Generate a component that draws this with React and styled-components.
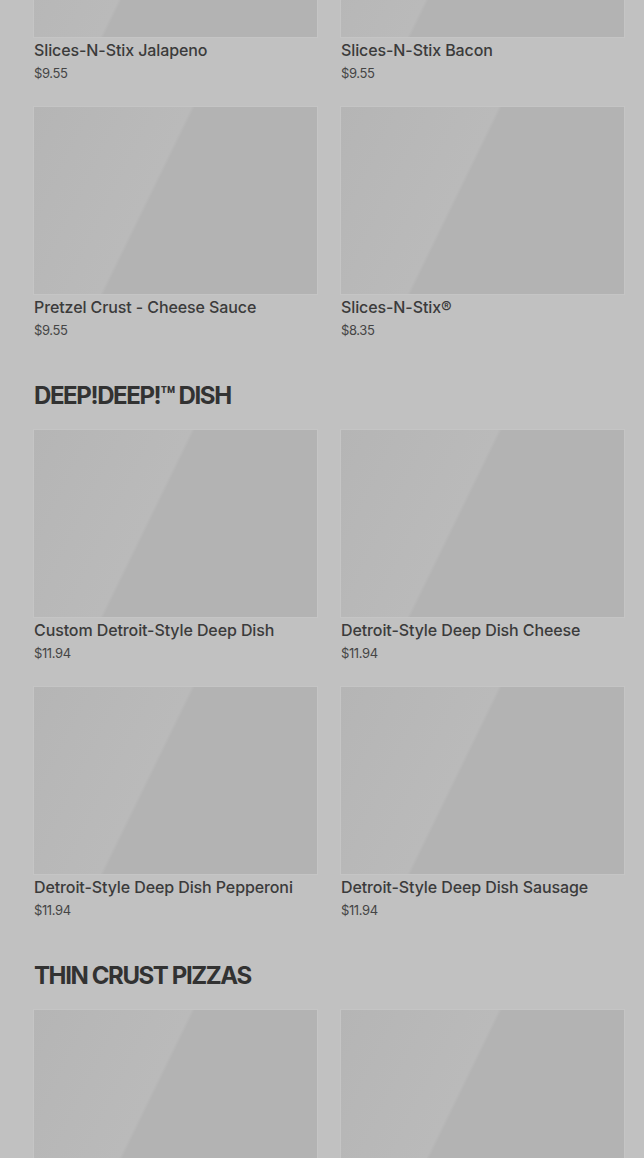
import React from "react";
import styled, { createGlobalStyle } from "styled-components";

const Global = createGlobalStyle`
  html, body { margin: 0; padding: 0; background: #c1c1c1; }
  body { font-family: Inter, Roboto, "Liberation Sans", Arial, sans-serif; overflow: hidden; }
  * { box-sizing: border-box; }
`;

const Page = styled.main`
  margin-top: -150px;
  padding: 0 20px 0 34px;
  display: flex;
  flex-direction: column;
`;

const Section = styled.section`
  display: flex;
  flex-direction: column;
  & + & { margin-top: 41px; }
`;

const Heading = styled.h2`
  margin: 0 0 18px;
  font-size: 24px;
  line-height: 32px;
  font-weight: 700;
  letter-spacing: -1.4px;
  color: #323232;
  text-transform: uppercase;
`;

const Grid = styled.div`
  display: grid;
  grid-template-columns: 1fr 1fr;
  column-gap: 24px;
  row-gap: 25px;
`;

const Card = styled.div`
  display: flex;
  flex-direction: column;
`;

const Thumb = styled.div`
  height: 187px;
  background: linear-gradient(
    116deg,
    #b5b5b5 0%,
    #b8b8b8 25%,
    #bababa 42%,
    #b3b3b3 43%,
    #b3b3b3 100%
  );
  box-shadow: 0 0 0 1px #c5c5c5;
`;

const Title = styled.div`
  margin-top: 3px;
  font-size: 16px;
  line-height: 20px;
  font-weight: 500;
  letter-spacing: -0.1px;
  color: #3b3b3b;
  white-space: nowrap;
`;

const Price = styled.div`
  margin-top: 4px;
  font-size: 13px;
  line-height: 18px;
  font-weight: 400;
  color: #454545;
  letter-spacing: -0.4px;
`;

const sections = [
  {
    title: null,
    items: [
      ["Slices-N-Stix Jalapeno", "$9.55"],
      ["Slices-N-Stix Bacon", "$9.55"],
      ["Pretzel Crust - Cheese Sauce", "$9.55"],
      ["Slices-N-Stix®", "$8.35"],
    ],
  },
  {
    title: "DEEP!DEEP!™ DISH",
    items: [
      ["Custom Detroit-Style Deep Dish", "$11.94"],
      ["Detroit-Style Deep Dish Cheese", "$11.94"],
      ["Detroit-Style Deep Dish Pepperoni", "$11.94"],
      ["Detroit-Style Deep Dish Sausage", "$11.94"],
    ],
  },
  {
    title: "THIN CRUST PIZZAS",
    items: [
      ["Thin Crust Cheese", "$9.99"],
      ["Thin Crust Pepperoni", "$9.99"],
    ],
  },
];

export default function App() {
  return (
    <>
      <Global />
      <Page>
        {sections.map((s, i) => (
          <Section key={i}>
            {s.title && <Heading>{s.title}</Heading>}
            <Grid>
              {s.items.map(([name, price]) => (
                <Card key={name}>
                  <Thumb />
                  <Title>{name}</Title>
                  <Price>{price}</Price>
                </Card>
              ))}
            </Grid>
          </Section>
        ))}
      </Page>
    </>
  );
}
